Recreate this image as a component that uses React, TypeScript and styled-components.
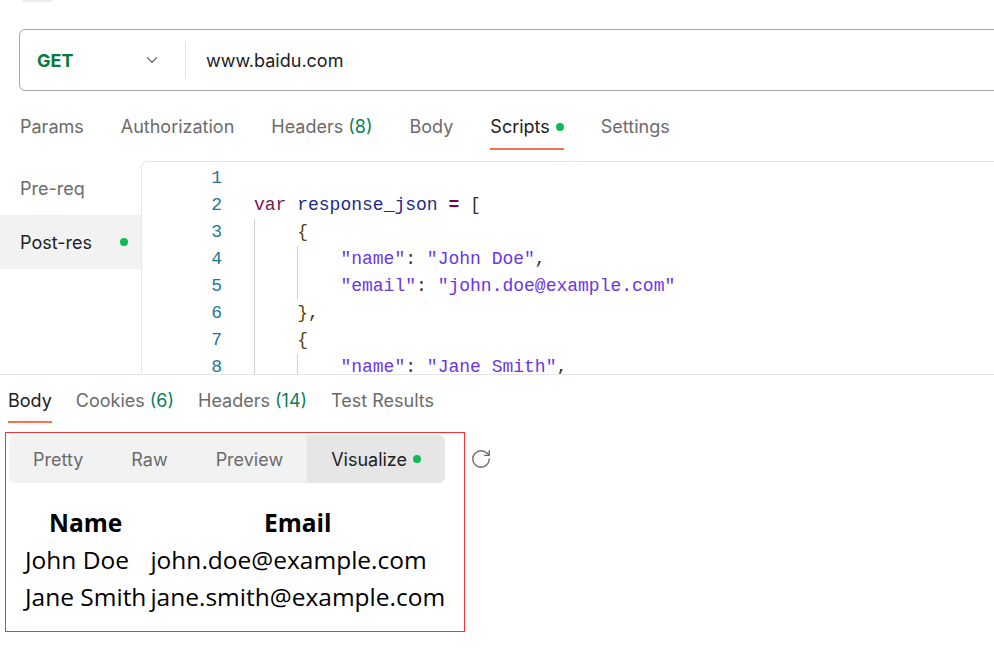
import React from "react";
import styled, { createGlobalStyle } from "styled-components";
import { ChevronDown, RotateCw } from "lucide-react";

const GlobalStyle = createGlobalStyle`
  html, body {
    margin: 0;
    padding: 0;
    background: #ffffff;
  }
  body {
    font-family: Inter, "Noto Sans", sans-serif;
    color: #212121;
    overflow: hidden;
  }
`;

const Page = styled.div`
  width: 994px;
  height: 666px;
  overflow: hidden;
`;

const TopStub = styled.div`
  width: 31px;
  height: 2px;
  margin-left: 22px;
  background: #ececec;
  border-radius: 0 0 4px 4px;
`;

const UrlBar = styled.div`
  display: flex;
  align-items: center;
  height: 62px;
  margin: 27px -20px 0 19px;
  border: 1px solid #a8a8a8;
  border-radius: 6px;
  box-sizing: border-box;
`;

const MethodPicker = styled.div`
  display: flex;
  align-items: center;
  justify-content: space-between;
  width: 165px;
  box-sizing: border-box;
  padding: 0 24px 0 17px;
  font-size: 18px;
  font-weight: 700;
  color: #0b7a3a;
`;

const Divider = styled.div`
  width: 1px;
  height: 36px;
  background: #e2e2e2;
`;

const UrlText = styled.div`
  padding-left: 20px;
  font-size: 18px;
  color: #212121;
`;

const TabBar = styled.div<{ $gap: number; $left: number; $top: number }>`
  display: flex;
  gap: ${(p) => p.$gap}px;
  padding: ${(p) => p.$top}px 0 0 ${(p) => p.$left}px;
`;

const Tab = styled.div<{ $active?: boolean; $pad: number }>`
  display: flex;
  align-items: center;
  flex-shrink: 0;
  line-height: 24px;
  font-size: 18px;
  padding-bottom: ${(p) => p.$pad}px;
  color: ${(p) => (p.$active ? "#212121" : "#6b6b6b")};
  border-bottom: 2px solid ${(p) => (p.$active ? "#f2764a" : "transparent")};
`;

const Count = styled.span`
  margin-left: 5px;
  color: #0c7f5c;
`;

const Dot = styled.span<{ $ml?: number }>`
  display: inline-block;
  flex-shrink: 0;
  width: 8px;
  height: 8px;
  border-radius: 50%;
  background: #10b955;
  margin-left: ${(p) => p.$ml ?? 6}px;
`;

const ScriptSection = styled.div`
  display: flex;
  height: 224px;
  border-bottom: 1px solid #e6e6e6;
  overflow: hidden;
`;

const Sidebar = styled.div`
  width: 141px;
  flex-shrink: 0;
  padding-top: 11px;
`;

const SideItem = styled.div<{ $active?: boolean }>`
  display: flex;
  align-items: center;
  justify-content: space-between;
  height: 54px;
  padding: 0 13px 0 20px;
  font-size: 18px;
  color: ${(p) => (p.$active ? "#212121" : "#6b6b6b")};
  background: ${(p) => (p.$active ? "#f2f2f2" : "transparent")};
`;

const Editor = styled.div`
  flex: 1;
  margin-top: 11px;
  padding-top: 3px;
  border-top: 1px solid #e6e6e6;
  border-left: 1px solid #e6e6e6;
  border-top-left-radius: 6px;
  font-family: "Liberation Mono", monospace;
  font-size: 18px;
  overflow: hidden;
`;

const CodeRow = styled.div`
  display: flex;
  height: 27px;
  line-height: 27px;
  white-space: pre;
`;

const LineNo = styled.div`
  width: 112px;
  flex-shrink: 0;
  box-sizing: border-box;
  padding-right: 32px;
  text-align: right;
  color: #237893;
`;

const Indent = styled.span`
  display: inline-block;
  width: 4ch;
  height: 27px;
  box-sizing: border-box;
  border-left: 1px solid #d3d3d3;
  vertical-align: top;
`;

type Kind = "kw" | "var" | "op" | "punc" | "brace" | "str";

const kindColor: Record<Kind, string> = {
  kw: "#7a1650",
  var: "#1d2a8a",
  op: "#7a0055",
  punc: "#333333",
  brace: "#5a4300",
  str: "#6a35e8",
};

const Token = styled.span<{ $kind: Kind }>`
  color: ${(p) => kindColor[p.$kind]};
  font-weight: ${(p) => (p.$kind === "op" ? 700 : 400)};
`;

const ResponseBox = styled.div`
  width: 460px;
  height: 200px;
  margin: 9px 0 0 5px;
  padding: 2px 0 0 3px;
  box-sizing: border-box;
  border: 1px solid #ff3030;
`;

const ViewRow = styled.div`
  display: flex;
  align-items: center;
`;

const Segmented = styled.div`
  display: flex;
  flex-shrink: 0;
  height: 48px;
  background: #f2f2f2;
  border-radius: 6px;
  overflow: hidden;
`;

const Segment = styled.div<{ $active?: boolean }>`
  display: flex;
  align-items: center;
  flex-shrink: 0;
  padding: 0 24px;
  font-size: 18px;
  color: ${(p) => (p.$active ? "#212121" : "#6b6b6b")};
  background: ${(p) => (p.$active ? "#e6e6e6" : "transparent")};
`;

const RefreshButton = styled.div`
  display: flex;
  flex-shrink: 0;
  margin-left: 25px;
  color: #6b6b6b;
`;

const DataTable = styled.table`
  margin: 20px 0 0 13px;
  font-family: "Open Sans", "Noto Sans", sans-serif;
  font-size: 24.5px;
  color: #000000;
  border-spacing: 2px;

  th,
  td {
    padding: 1px;
    height: 33px;
    line-height: 33px;
  }
  th {
    font-weight: 700;
    text-align: center;
  }
  td {
    text-align: left;
    white-space: nowrap;
  }
`;

type Line = { indent: number; tokens: [string, Kind][] };

const code: Line[] = [
  { indent: 0, tokens: [] },
  {
    indent: 0,
    tokens: [
      ["var", "kw"],
      [" ", "punc"],
      ["response_json", "var"],
      [" ", "punc"],
      ["=", "op"],
      [" ", "punc"],
      ["[", "punc"],
    ],
  },
  { indent: 1, tokens: [["{", "brace"]] },
  {
    indent: 2,
    tokens: [
      ['"name"', "str"],
      [": ", "punc"],
      ['"John Doe"', "str"],
      [",", "punc"],
    ],
  },
  {
    indent: 2,
    tokens: [
      ['"email"', "str"],
      [": ", "punc"],
      ['"john.doe@example.com"', "str"],
    ],
  },
  {
    indent: 1,
    tokens: [
      ["}", "brace"],
      [",", "punc"],
    ],
  },
  { indent: 1, tokens: [["{", "brace"]] },
  {
    indent: 2,
    tokens: [
      ['"name"', "str"],
      [": ", "punc"],
      ['"Jane Smith"', "str"],
      [",", "punc"],
    ],
  },
];

const people = [
  { name: "John Doe", email: "john.doe@example.com" },
  { name: "Jane Smith", email: "jane.smith@example.com" },
];

const App = () => {
  return (
    <Page>
      <GlobalStyle />
      <TopStub />
      <UrlBar>
        <MethodPicker>
          GET
          <ChevronDown size={18} color="#6b6b6b" strokeWidth={1.6} />
        </MethodPicker>
        <Divider />
        <UrlText>www.baidu.com</UrlText>
      </UrlBar>

      <TabBar $gap={37} $left={20} $top={24}>
        <Tab $pad={9}>Params</Tab>
        <Tab $pad={9}>Authorization</Tab>
        <Tab $pad={9}>
          Headers<Count>(8)</Count>
        </Tab>
        <Tab $pad={9}>Body</Tab>
        <Tab $pad={9} $active>
          Scripts
          <Dot />
        </Tab>
        <Tab $pad={9}>Settings</Tab>
      </TabBar>

      <ScriptSection>
        <Sidebar>
          <SideItem>Pre-req</SideItem>
          <SideItem $active>
            Post-res
            <Dot $ml={0} />
          </SideItem>
        </Sidebar>
        <Editor>
          {code.map((line, i) => (
            <CodeRow key={i}>
              <LineNo>{i + 1}</LineNo>
              <span>
                {Array.from({ length: line.indent }).map((_, j) => (
                  <Indent key={j} />
                ))}
                {line.tokens.map(([text, kind], k) => (
                  <Token key={k} $kind={kind}>
                    {text}
                  </Token>
                ))}
              </span>
            </CodeRow>
          ))}
        </Editor>
      </ScriptSection>

      <TabBar $gap={24} $left={8} $top={14}>
        <Tab $pad={8} $active>
          Body
        </Tab>
        <Tab $pad={8}>
          Cookies<Count>(6)</Count>
        </Tab>
        <Tab $pad={8}>
          Headers<Count>(14)</Count>
        </Tab>
        <Tab $pad={8}>Test Results</Tab>
      </TabBar>

      <ResponseBox>
        <ViewRow>
          <Segmented>
            <Segment>Pretty</Segment>
            <Segment>Raw</Segment>
            <Segment>Preview</Segment>
            <Segment $active>
              Visualize
              <Dot />
            </Segment>
          </Segmented>
          <RefreshButton>
            <RotateCw size={22} strokeWidth={1.5} />
          </RefreshButton>
        </ViewRow>
        <DataTable>
          <thead>
            <tr>
              <th>Name</th>
              <th>Email</th>
            </tr>
          </thead>
          <tbody>
            {people.map((p) => (
              <tr key={p.email}>
                <td>{p.name}</td>
                <td>{p.email}</td>
              </tr>
            ))}
          </tbody>
        </DataTable>
      </ResponseBox>
    </Page>
  );
};

export default App;
